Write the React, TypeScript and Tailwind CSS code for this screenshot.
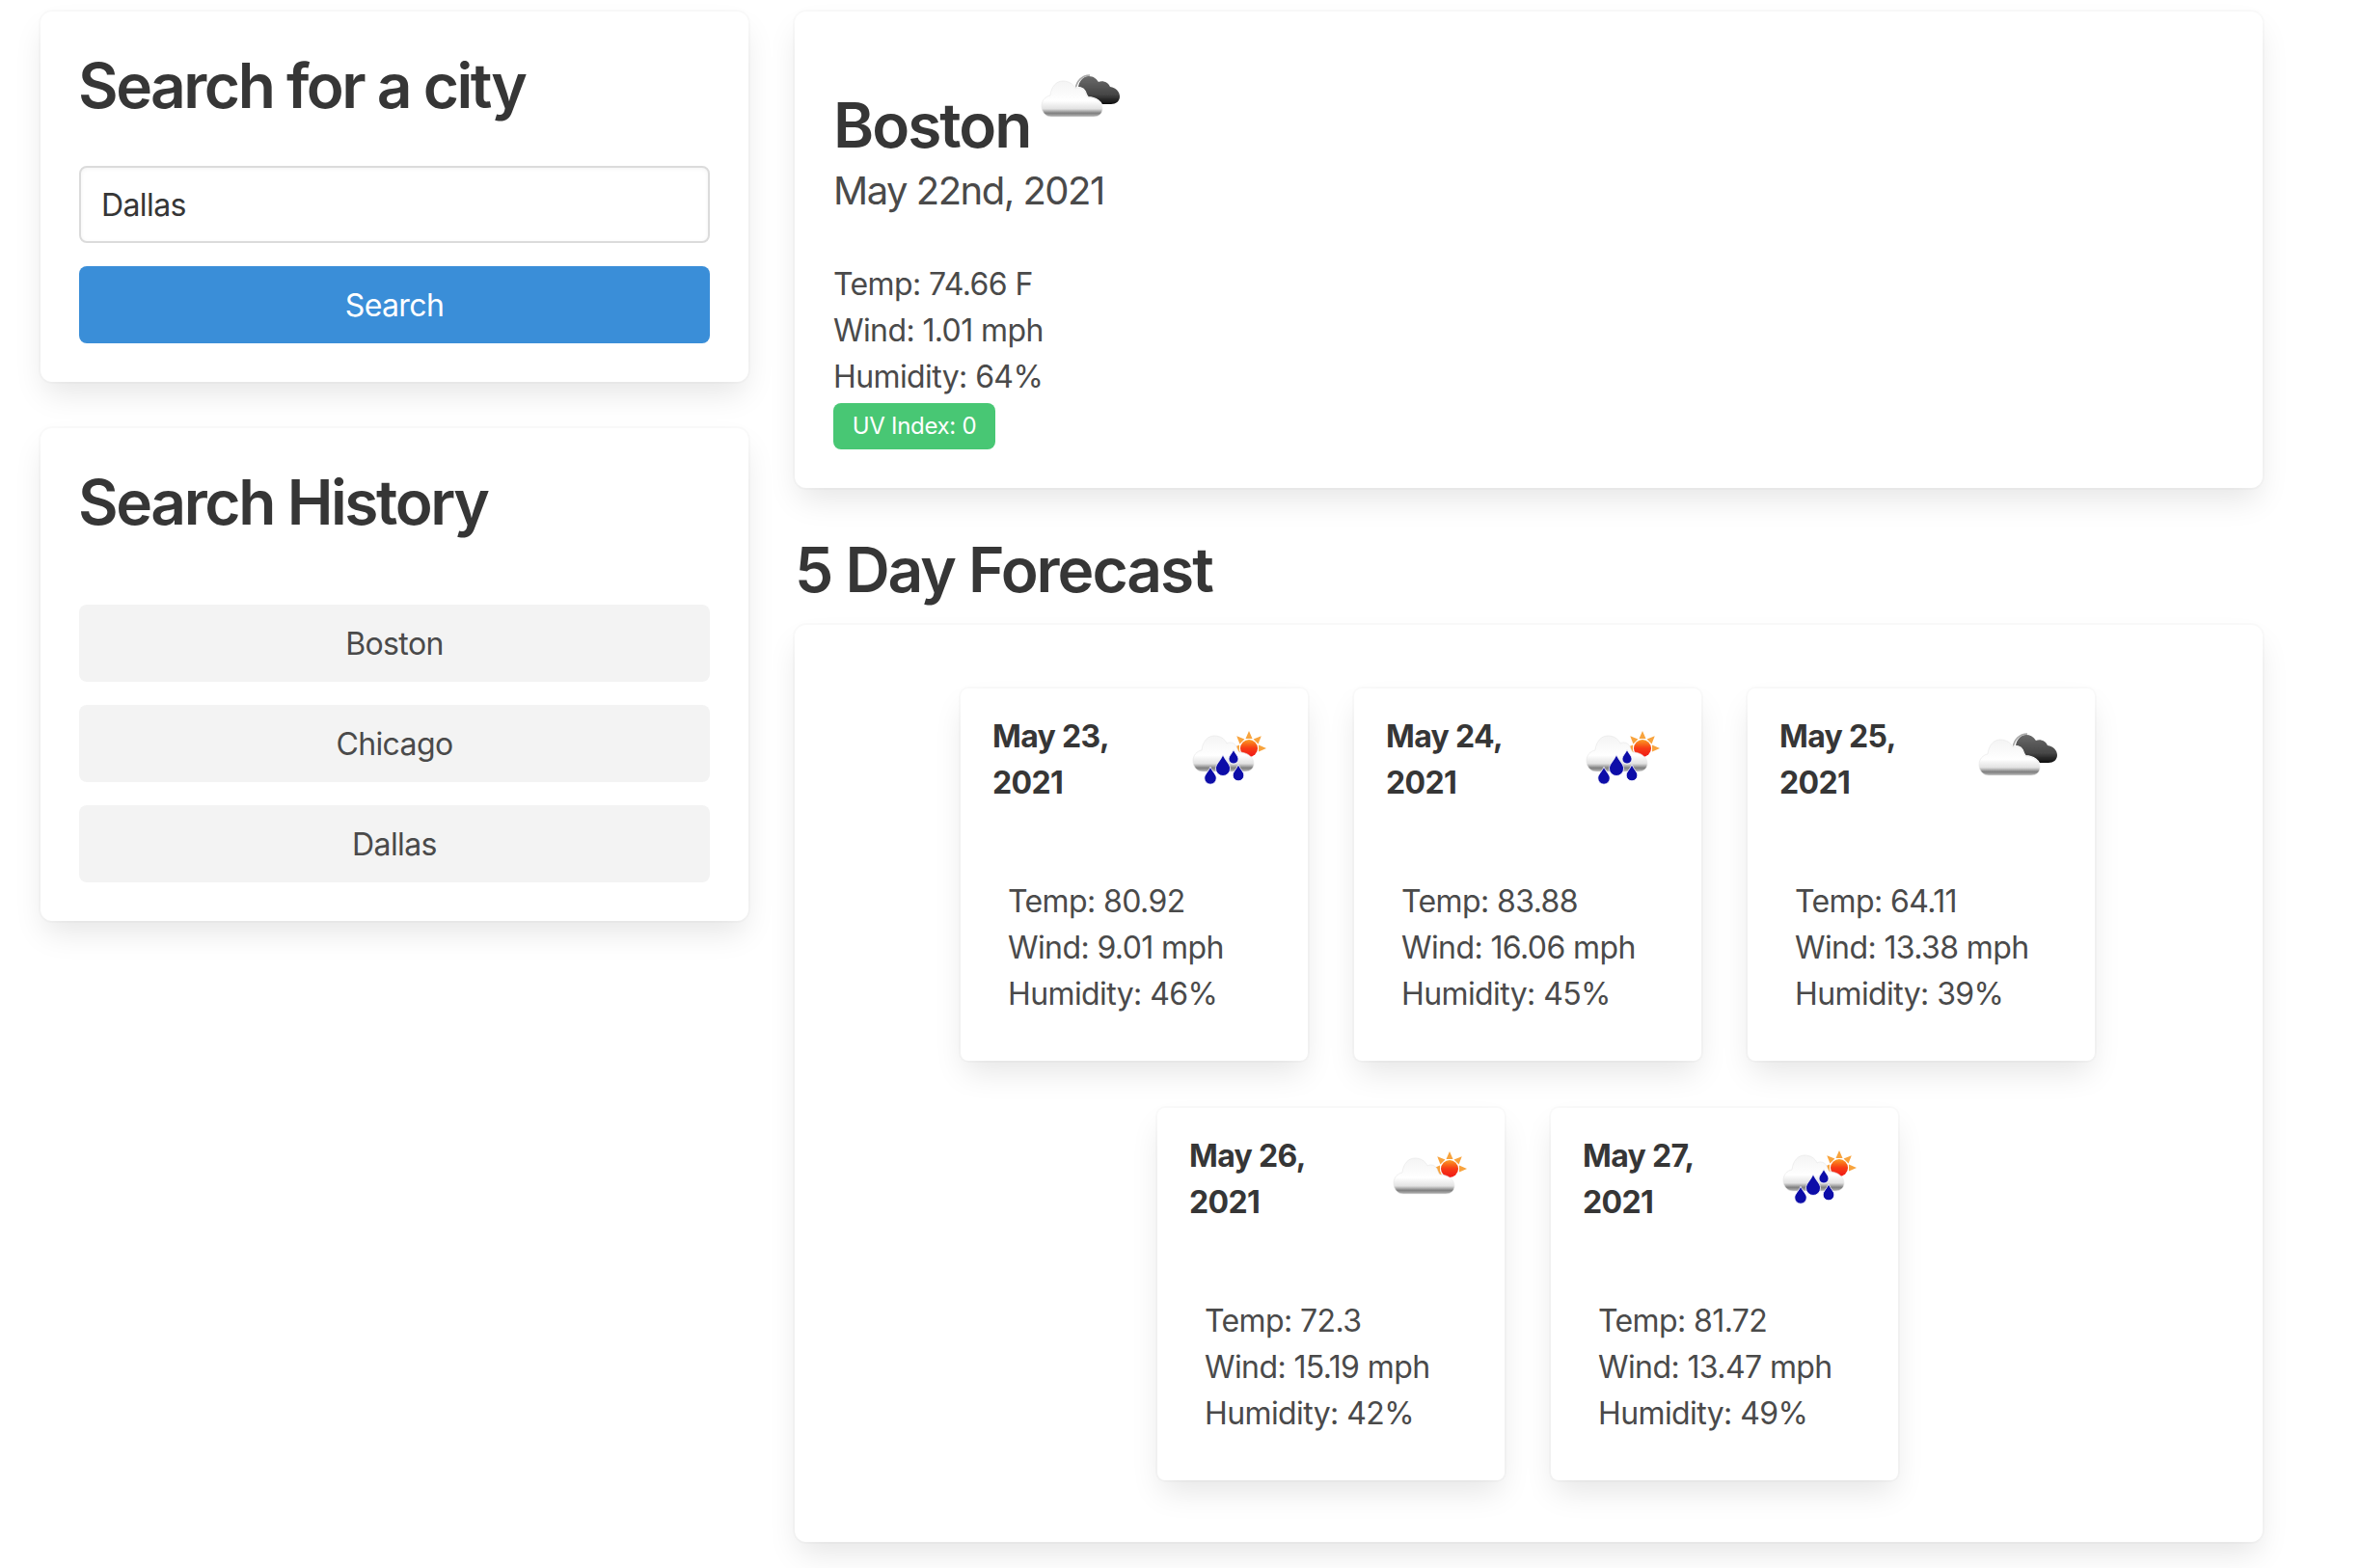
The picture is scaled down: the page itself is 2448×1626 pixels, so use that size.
import React from "react";

type IconKind = "clouds" | "rain" | "sun";

interface Day {
  date: string;
  icon: IconKind;
  temp: string;
  wind: string;
  humidity: string;
}

const days: Day[] = [
  { date: "May 23, 2021", icon: "rain", temp: "80.92", wind: "9.01", humidity: "46" },
  { date: "May 24, 2021", icon: "rain", temp: "83.88", wind: "16.06", humidity: "45" },
  { date: "May 25, 2021", icon: "clouds", temp: "64.11", wind: "13.38", humidity: "39" },
  { date: "May 26, 2021", icon: "sun", temp: "72.3", wind: "15.19", humidity: "42" },
  { date: "May 27, 2021", icon: "rain", temp: "81.72", wind: "13.47", humidity: "49" },
];

const cloudPath =
  "M10 37 C4 37 0 32 0 26 C0 20 4 16 9 15 C10 6 15 0 22 0 C28 0 33 3 35 8 C38 6 43 7 45 11 C46 14 47 16 48 17 C56 17 63 22 63 29 C63 34 59 37 54 37 Z";

const drops = [
  { x: 31, y: 71, r: 6.2 },
  { x: 44, y: 61, r: 7.5 },
  { x: 55, y: 51, r: 5 },
  { x: 60, y: 68, r: 5.8 },
];

function Sun({ cx, cy }: { cx: number; cy: number }) {
  return (
    <g>
      {[-100, -55, -10, 35, 80, 190, 235].map((a) => (
        <polygon
          key={a}
          points={`${cx - 3.5},${cy - 10} ${cx + 3.5},${cy - 10} ${cx},${cy - 18}`}
          fill="#f8a33c"
          transform={`rotate(${a + 10} ${cx} ${cy})`}
        />
      ))}
      <circle cx={cx} cy={cy} r="9" fill="url(#sunFill)" />
    </g>
  );
}

function WeatherIcon({ kind, className }: { kind: IconKind; className?: string }) {
  return (
    <svg viewBox="0 0 100 100" className={className}>
      <defs>
        <linearGradient id="cloudFill" x1="0" y1="0" x2="0" y2="1">
          <stop offset="0" stopColor="#f4f4f4" />
          <stop offset="0.55" stopColor="#ffffff" />
          <stop offset="0.78" stopColor="#e2e2e2" />
          <stop offset="0.9" stopColor="#808080" />
          <stop offset="1" stopColor="#b4b4b4" />
        </linearGradient>
        <linearGradient id="darkFill" x1="0" y1="0" x2="0" y2="1">
          <stop offset="0" stopColor="#6a6a6a" />
          <stop offset="0.65" stopColor="#474747" />
          <stop offset="1" stopColor="#0c0c0c" />
        </linearGradient>
        <linearGradient id="sunFill" x1="0" y1="0" x2="0" y2="1">
          <stop offset="0" stopColor="#fb9c25" />
          <stop offset="0.5" stopColor="#f73a12" />
          <stop offset="1" stopColor="#f01818" />
        </linearGradient>
        <filter id="soft" x="-10%" y="-10%" width="120%" height="120%">
          <feGaussianBlur stdDeviation="0.6" />
        </filter>
      </defs>
      <g filter="url(#soft)">
        {kind === "clouds" && (
          <>
            <path
              d="M50 42 C49 33 54 26 61 26 C66 26 69 29 71 32 C75 30 81 32 83 37 C89 38 93 42 93 47 C93 52 89 55 84 55 L68 55 Z"
              fill="url(#darkFill)"
            />
            <path d="M47 40 C48 31 54 25 62 25" fill="none" stroke="#a8a8a8" strokeWidth="1.6" />
            <path
              d={cloudPath}
              transform="translate(12 31)"
              fill="url(#cloudFill)"
              stroke="#ffffff"
              strokeWidth="2"
            />
            <path d={cloudPath} transform="translate(12 31)" fill="url(#cloudFill)" stroke="#e6e6e6" strokeWidth="0.6" />
          </>
        )}
        {kind === "rain" && (
          <>
            <Sun cx={71} cy={40} />
            <path d={cloudPath} transform="translate(13 27)" fill="url(#cloudFill)" stroke="#e6e6e6" strokeWidth="0.6" />
            {drops.map((d) => (
              <path
                key={d.x}
                d={`M${d.x} ${d.y - d.r * 1.9} C${d.x + d.r * 0.4} ${d.y - d.r} ${d.x + d.r} ${d.y - d.r * 0.6} ${d.x + d.r} ${d.y} A${d.r} ${d.r} 0 0 1 ${d.x - d.r} ${d.y} C${d.x - d.r} ${d.y - d.r * 0.6} ${d.x - d.r * 0.4} ${d.y - d.r} ${d.x} ${d.y - d.r * 1.9} Z`}
                fill="#0707a8"
                stroke="#ffffff"
                strokeWidth="0.8"
              />
            ))}
          </>
        )}
        {kind === "sun" && (
          <>
            <Sun cx={75} cy={41} />
            <path d={cloudPath} transform="translate(17 30)" fill="url(#cloudFill)" stroke="#e6e6e6" strokeWidth="0.6" />
          </>
        )}
      </g>
    </svg>
  );
}

function ForecastCard({ day }: { day: Day }) {
  return (
    <div className="w-[360px] rounded-lg bg-white text-[#4a4a4a] shadow-[0_16px_32px_-4px_rgba(10,10,10,0.1),0_0_0_2px_rgba(10,10,10,0.02)]">
      <div className="flex items-start justify-between pt-6 pr-8 pl-[33px]">
        <p className="w-[180px] pt-0.5 text-[32px] leading-[48px] font-bold tracking-[-0.65px] text-[#363636]">
          {day.date}
        </p>
        <WeatherIcon kind={day.icon} className="-mt-0.5 size-[100px]" />
      </div>
      <div className="pt-[75px] pr-12 pb-[45px] pl-[49px] text-[32px] leading-[48px] tracking-[-0.6px]">
        <p>Temp: {day.temp}</p>
        <p>Wind: {day.wind} mph</p>
        <p>Humidity: {day.humidity}%</p>
      </div>
    </div>
  );
}

export default function App() {
  return (
    <div className="min-h-[1626px] bg-white pt-3 pr-[102px] pl-[42px] font-['Inter','Noto_Sans',sans-serif] text-[#4a4a4a]">
      <div className="flex items-start gap-12">
        {/* Sidebar */}
        <div className="flex w-[734px] shrink-0 flex-col gap-12">
          <div className="rounded-xl bg-white p-10 shadow-[0_16px_32px_-4px_rgba(10,10,10,0.1),0_0_0_2px_rgba(10,10,10,0.02)]">
            <h2 className="mt-px -ml-px text-[64px] leading-[72px] font-semibold tracking-[-2.5px] text-[#363636]">
              Search for a city
            </h2>
            <input
              readOnly
              value="Dallas"
              className="mt-[47px] h-20 w-full rounded-lg border-2 border-[#dbdbdb] bg-white px-[21px] text-[32px] tracking-[-0.6px] text-[#363636] shadow-[inset_0_1px_4px_rgba(10,10,10,0.05)] outline-none"
            />
            <button className="mt-6 h-20 w-full rounded-lg bg-[#3a8ed8] pt-0.5 text-[32px] tracking-[-0.6px] text-white">
              Search
            </button>
          </div>

          <div className="rounded-xl bg-white p-10 shadow-[0_16px_32px_-4px_rgba(10,10,10,0.1),0_0_0_2px_rgba(10,10,10,0.02)]">
            <h2 className="mt-px -ml-px text-[64px] leading-[72px] font-semibold tracking-[-2.4px] text-[#363636]">
              Search History
            </h2>
            <div className="mt-[70px] flex flex-col gap-6">
              {["Boston", "Chicago", "Dallas"].map((city) => (
                <button
                  key={city}
                  className="h-20 w-full rounded-lg bg-[#f3f3f3] pt-0.5 text-[32px] tracking-[-0.6px] text-[#4a4a4a]"
                >
                  {city}
                </button>
              ))}
            </div>
          </div>
        </div>

        {/* Main */}
        <div className="min-w-0 flex-1">
          <div className="rounded-xl bg-white p-10 shadow-[0_16px_32px_-4px_rgba(10,10,10,0.1),0_0_0_2px_rgba(10,10,10,0.02)]">
            <h2 className="mt-px text-[64px] leading-[72px] font-semibold tracking-[-2px] text-[#363636]">
              Boston
              <WeatherIcon kind="clouds" className="inline size-[100px] align-baseline" />
            </h2>
            <p className="mt-[7px] text-[40px] leading-[50px] tracking-[-1.5px]">May 22nd, 2021</p>
            <div className="mt-12 text-[32px] leading-[48px] tracking-[-0.6px]">
              <p>Temp: 74.66 F</p>
              <p>Wind: 1.01 mph</p>
              <p>Humidity: 64%</p>
            </div>
            <span className="mt-[3px] flex h-12 w-[168px] items-center justify-center rounded-lg bg-[#48c774] text-2xl tracking-[-0.3px] text-white">
              UV Index: 0
            </span>
          </div>

          <h2 className="mt-[49px] text-[64px] leading-[72px] font-semibold tracking-[-2px] text-[#363636]">
            5 Day Forecast
          </h2>

          <div className="mt-[21px] rounded-xl bg-white pt-[66px] pr-[41px] pb-[64px] pl-[39px] shadow-[0_16px_32px_-4px_rgba(10,10,10,0.1),0_0_0_2px_rgba(10,10,10,0.02)]">
            <div className="flex flex-wrap justify-center gap-x-12 gap-y-[49px]">
              {days.map((day) => (
                <ForecastCard key={day.date} day={day} />
              ))}
            </div>
          </div>
        </div>
      </div>
    </div>
  );
}
